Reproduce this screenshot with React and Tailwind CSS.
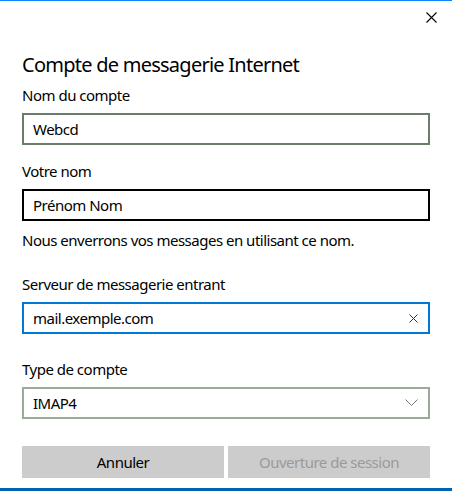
import { useState } from "react";

function Field({ label, children, className = "" }) {
  return (
    <div className={className}>
      <label className="block text-[15px] leading-5 tracking-[-0.5px] text-black">{label}</label>
      <div className="mt-[8px]">{children}</div>
    </div>
  );
}

export default function App() {
  const [account, setAccount] = useState("Webcd");
  const [name, setName] = useState("Prénom Nom");
  const [server, setServer] = useState("mail.exemple.com");

  return (
    <div
      className="w-[452px] h-[491px] bg-white flex flex-col border-t border-[#0a84ff] overflow-hidden"
      style={{ fontFamily: '"Noto Sans", "Open Sans", sans-serif' }}
    >
      <div className="flex justify-end pr-[15px] pt-[10px]">
        <button type="button" className="w-[12px] h-[12px] flex items-center justify-center">
          <svg width="11" height="11" viewBox="0 0 11 11" fill="none" stroke="#000" strokeWidth="1.1">
            <path d="M0.5 0.5 L10.5 10.5 M10.5 0.5 L0.5 10.5" />
          </svg>
        </button>
      </div>

      <main className="flex-1 px-[22px] pt-[28px] flex flex-col">
        <h1 className="text-[20px] leading-[28px] tracking-[-0.75px] text-black font-normal">
          Compte de messagerie Internet
        </h1>

        <Field label="Nom du compte" className="mt-[6px]">
          <input
            className="w-full h-[32px] border-2 border-[#6a7d6a] px-[9px] text-[15px] tracking-[-0.5px] text-black outline-none"
            value={account}
            onChange={(e) => setAccount(e.target.value)}
          />
        </Field>

        <Field label="Votre nom" className="mt-[16px]">
          <input
            className="w-full h-[32px] border-2 border-black px-[9px] text-[15px] tracking-[-0.5px] text-black outline-none"
            value={name}
            onChange={(e) => setName(e.target.value)}
          />
        </Field>
        <p className="mt-[9px] text-[15px] leading-5 tracking-[-0.5px] text-black">
          Nous enverrons vos messages en utilisant ce nom.
        </p>

        <Field label="Serveur de messagerie entrant" className="mt-[24px]">
          <div className="flex items-center h-[32px] border-2 border-[#0078d7] pl-[9px] pr-[10px]">
            <input
              className="flex-1 min-w-0 text-[15px] tracking-[-0.5px] text-black outline-none"
              value={server}
              onChange={(e) => setServer(e.target.value)}
            />
            <svg width="9" height="9" viewBox="0 0 9 9" fill="none" stroke="#333" strokeWidth="1">
              <path d="M0.5 0.5 L8.5 8.5 M8.5 0.5 L0.5 8.5" />
            </svg>
          </div>
        </Field>

        <Field label="Type de compte" className="mt-[25px]">
          <div className="flex items-center justify-between h-[32px] border-2 border-[#9aab9a] pl-[9px] pr-[10px]">
            <span className="text-[15px] tracking-[-0.5px] text-black">IMAP4</span>
            <svg width="13" height="8" viewBox="0 0 13 8" fill="none" stroke="#777" strokeWidth="1">
              <path d="M0.5 0.5 L6.5 6.5 L12.5 0.5" />
            </svg>
          </div>
        </Field>

        <div className="mt-[27px] grid grid-cols-2 gap-[4px]">
          <button type="button" className="h-[32px] bg-[#cccccc] text-[15px] tracking-[-0.5px] text-black">
            Annuler
          </button>
          <button
            type="button"
            disabled
            className="h-[32px] bg-[#cccccc] text-[15px] tracking-[-0.5px] text-[#9a9a9a]"
          >
            Ouverture de session
          </button>
        </div>
      </main>

      <div className="h-[3px] bg-[#0063b1]" />
    </div>
  );
}
